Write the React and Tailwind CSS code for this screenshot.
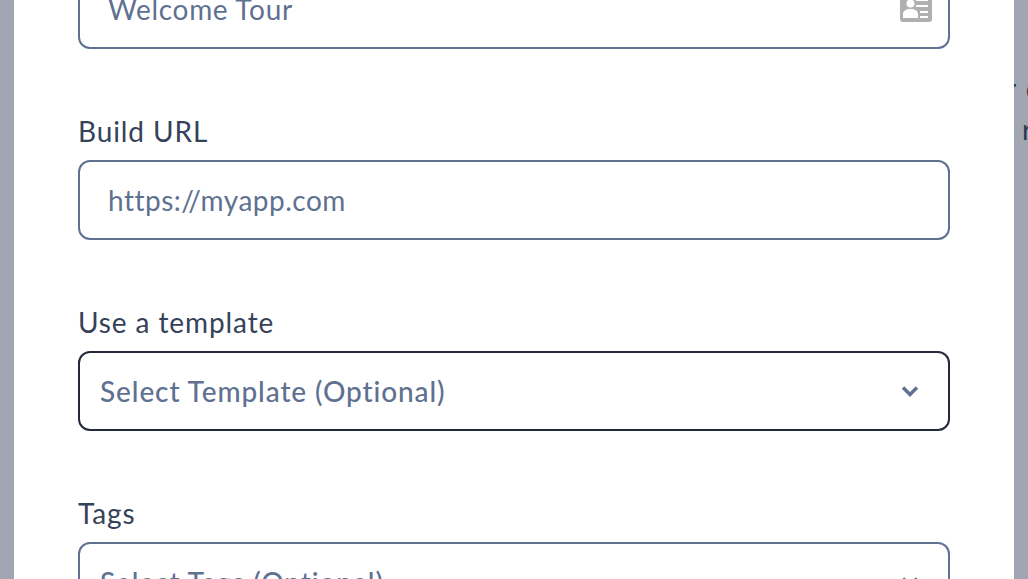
function Field({ label, children }) {
  return (
    <div className="flex flex-col">
      <label className="h-[31px] mb-[13px] -mt-[3px] flex items-center text-[28px] leading-[31px] text-[#354259] tracking-[0.9px]">{label}</label>
      {children}
    </div>
  );
}

function Chevron() {
  return (
    <svg width="18" height="12" viewBox="0 0 18 12" fill="none">
      <path d="M2 2.500l7 7 7-7" stroke="#5f7191" strokeWidth="3.400" />
    </svg>
  );
}

export default function App() {
  return (
    <div className="flex h-[579px] w-[1028px] overflow-hidden bg-[#a2a6b2] font-['Lato','Noto_Sans',sans-serif]">
      <div className="w-[14px] shrink-0" />
      <main className="w-[1000px] shrink-0 bg-white px-[64px] h-[700px] -mt-[31px]">
        <div className="flex flex-col gap-[70px]">
          <div className="relative flex h-[80px] items-center rounded-[12px] border-2 border-[#5f7191] pl-[28px] text-[28px] tracking-[0.67px] text-[#5f7191]">
            Welcome Tour
            <svg className="absolute right-[16px] top-[23px]" width="32" height="28" viewBox="0 0 32 28">
              <path fill="#b0b0b0" fillRule="evenodd" d="M3 0h26a3 3 0 0 1 3 3v22a3 3 0 0 1-3 3H3a3 3 0 0 1-3-3V3a3 3 0 0 1 3-3zM10.500 5.500a4 4 0 1 0 0 8 4 4 0 0 0 0-8zM3 24h15v-4c0-3-3-5-7.500-5S3 17 3 20zM16 5v2h12V5zM16 11v2h12v-2zM20 17v2h8v-2zM20 22v2h8v-2z" />
            </svg>
          </div>
          <Field label="Build URL">
            <div className="flex h-[80px] items-center rounded-[12px] border-2 border-[#5f7191] pl-[28px] text-[28px] tracking-[0.5px] text-[#5f7191]">https://myapp.com</div>
          </Field>
          <Field label="Use a template">
            <div className="flex h-[80px] items-center justify-between rounded-[12px] border-2 border-[#23293a] pl-[20px] pr-[29px] text-[28px] font-medium tracking-[0.9px] text-[#5f7191]">
              Select Template (Optional)
              <Chevron />
            </div>
          </Field>
          <Field label="Tags">
            <div className="flex h-[80px] items-center justify-between rounded-[12px] border-2 border-[#5f7191] pl-[20px] pr-[29px] text-[28px] font-medium tracking-[0.9px] text-[#5f7191]">
              Select Tags (Optional)
              <Chevron />
            </div>
          </Field>
        </div>
      </main>
      <div className="w-[14px] shrink-0 overflow-hidden pt-[68px] text-[28px] leading-[41px] text-[#2f3a50] whitespace-nowrap [word-spacing:3px]">
        <div className="-ml-[8px]">r c</div>
        <div className="ml-[8px]">r</div>
      </div>
    </div>
  );
}
